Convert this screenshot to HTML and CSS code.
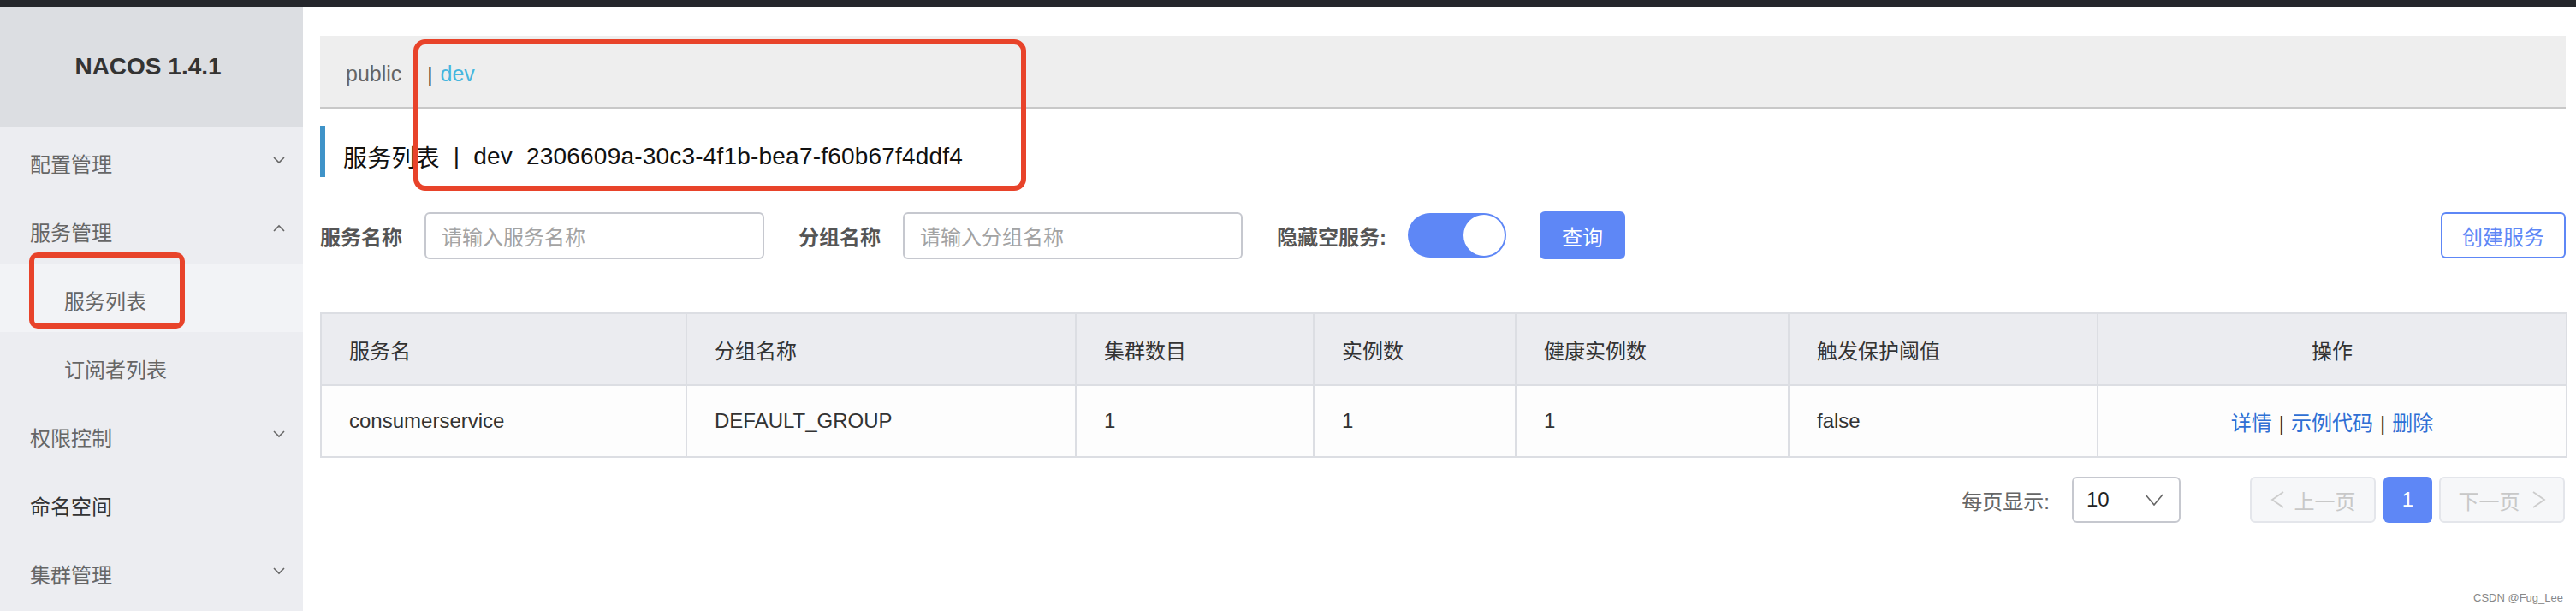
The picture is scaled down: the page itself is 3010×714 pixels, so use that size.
FILE: index.html
```html
<!DOCTYPE html>
<html lang="zh-CN">
<head>
<meta charset="utf-8">
<title>Nacos</title>
<link rel="stylesheet" href="styles.css">
</head>
<body>
<div class="topbar"></div>
<div class="layout">
  <aside class="sidebar">
    <div class="logo">NACOS 1.4.1</div>
    <div class="menu-item"><span>配置管理</span><svg class="chev" viewBox="0 0 14 10"><polyline points="1,2 7,8 13,2"/></svg></div>
    <div class="menu-item"><span>服务管理</span><svg class="chev" viewBox="0 0 14 10"><polyline points="1,8 7,2 13,8"/></svg></div>
    <div class="menu-item sub active"><span>服务列表</span></div>
    <div class="menu-item sub"><span>订阅者列表</span></div>
    <div class="menu-item"><span>权限控制</span><svg class="chev" viewBox="0 0 14 10"><polyline points="1,2 7,8 13,2"/></svg></div>
    <div class="menu-item strong"><span>命名空间</span></div>
    <div class="menu-item"><span>集群管理</span><svg class="chev" viewBox="0 0 14 10"><polyline points="1,2 7,8 13,2"/></svg></div>
  </aside>
  <main class="main">
    <div class="breadcrumb">
      <span class="ns">public</span>
      <span class="ns-sep">|</span>
      <span class="ns-active">dev</span>
    </div>
    <div class="title">
      <span>服务列表</span><span class="title-sep">|</span><span>dev&nbsp;&nbsp;2306609a-30c3-4f1b-bea7-f60b67f4ddf4</span>
    </div>
    <div class="search">
      <span class="label">服务名称</span>
      <div class="input"><span class="ph">请输入服务名称</span></div>
      <span class="label gap">分组名称</span>
      <div class="input"><span class="ph">请输入分组名称</span></div>
      <span class="label gap">隐藏空服务:</span>
      <div class="switch"><div class="knob"></div></div>
      <div class="btn primary">查询</div>
      <div class="btn outline">创建服务</div>
    </div>
    <table class="grid">
      <colgroup>
        <col style="width:427px"><col style="width:455px"><col style="width:278px"><col style="width:236px"><col style="width:319px"><col style="width:361px"><col style="width:548px">
      </colgroup>
      <thead>
        <tr><th>服务名</th><th>分组名称</th><th>集群数目</th><th>实例数</th><th>健康实例数</th><th>触发保护阈值</th><th class="center">操作</th></tr>
      </thead>
      <tbody>
        <tr><td>consumerservice</td><td>DEFAULT_GROUP</td><td>1</td><td>1</td><td>1</td><td>false</td>
          <td class="center"><span class="link">详情</span><span class="sep">|</span><span class="link">示例代码</span><span class="sep">|</span><span class="link">删除</span></td></tr>
      </tbody>
    </table>
    <div class="pager">
      <span class="per">每页显示:</span>
      <div class="select"><span>10</span><svg class="sel-chev" viewBox="0 0 22 14"><polyline points="1,1 11,13 21,1"/></svg></div>
      <div class="pbtn disabled prev"><svg class="pchev" viewBox="0 0 16 20"><polyline points="15,1 2,10 15,19"/></svg><span>上一页</span></div>
      <div class="pbtn current">1</div>
      <div class="pbtn disabled next"><span>下一页</span><svg class="pchev" viewBox="0 0 16 20"><polyline points="1,1 14,10 1,19"/></svg></div>
    </div>
  </main>
</div>
<div class="mark mark-top"></div>
<div class="mark mark-side"></div>
<div class="watermark">CSDN @Fug_Lee</div>
</body>
</html>
```
FILE: styles.css
```css
html, body {
  margin: 0;
  padding: 0;
}
body {
  width: 3010px;
  height: 714px;
  overflow: hidden;
  position: relative;
  background: #fff;
  font-family: "Liberation Sans", "Noto Sans CJK SC", sans-serif;
  font-size: 24px;
  color: #333;
}
.topbar {
  height: 8px;
  background: #25272c;
}
.layout {
  display: flex;
  height: 706px;
}
.sidebar {
  width: 354px;
  flex: none;
  background: #ecedf1;
}
.logo {
  height: 140px;
  background: #dcdee2;
  display: flex;
  align-items: center;
  justify-content: center;
  font-weight: bold;
  font-size: 28px;
  color: #333;
  padding-right: 8px;
  box-sizing: border-box;
}
.menu-item {
  height: 80px;
  display: flex;
  align-items: center;
  justify-content: space-between;
  padding: 4px 21px 0 35px;
  box-sizing: border-box;
  color: #666;
  font-size: 24px;
}
.menu-item.sub {
  padding-left: 75px;
}
.menu-item.active {
  background: #f2f3f6;
}
.menu-item.strong {
  color: #333;
}
.chev {
  width: 14px;
  height: 10px;
  fill: none;
  stroke: #666;
  stroke-width: 1.6;
  margin-top: -6px;
}
.main {
  flex: 1;
  padding: 34px 12px 0 20px;
  min-width: 0;
}
.breadcrumb {
  height: 83px;
  background: #eeeeee;
  border-bottom: 2px solid #c8c8c8;
  display: flex;
  align-items: center;
  padding: 6px 0 0 30px;
  box-sizing: content-box;
  height: 77px;
  font-size: 24px;
}
.ns {
  color: #666;
  font-size: 25px;
}
.ns-sep {
  color: #333;
  margin-left: 30px;
  margin-right: 9px;
}
.ns-active {
  color: #46b6de;
  font-size: 25px;
}
.title {
  margin-top: 20px;
  height: 60px;
  box-sizing: border-box;
  border-left: 6px solid #3f93c8;
  padding: 12px 0 0 21px;
  font-size: 28px;
  color: #111;
  display: flex;
  align-items: center;
  letter-spacing: 0.2px;
}
.title-sep {
  margin: 0 16px;
}
.search {
  margin-top: 40px;
  height: 56px;
  display: flex;
  align-items: center;
}
.label {
  font-weight: bold;
  color: #555;
  margin-right: 26px;
}
.label.gap {
  margin-left: 40px;
}
.input {
  width: 397px;
  height: 55px;
  box-sizing: border-box;
  border: 2px solid #c6c8cf;
  border-radius: 6px;
  display: flex;
  align-items: center;
  padding-left: 18px;
}
.ph {
  color: #a3a3a3;
}
.switch {
  width: 115px;
  height: 52px;
  border-radius: 26px;
  background: #5e87f6;
  display: flex;
  align-items: center;
  justify-content: flex-end;
  padding-right: 2px;
  box-sizing: border-box;
  margin-left: -1px;
}
.knob {
  width: 48px;
  height: 48px;
  border-radius: 50%;
  background: #fff;
}
.btn {
  height: 56px;
  box-sizing: border-box;
  border-radius: 6px;
  display: flex;
  align-items: center;
  justify-content: center;
}
.btn.primary {
  margin-left: 39px;
  width: 100px;
  background: #5e87f6;
  color: #fff;
}
.btn.outline {
  margin-left: auto;
  width: 146px;
  height: 54px;
  border: 2px solid #5e87f6;
  color: #5e87f6;
}
.grid {
  margin-top: 62px;
  width: 2624px;
  table-layout: fixed;
  border-collapse: collapse;
  border: 2px solid #dcdee3;
}
.grid th, .grid td {
  border: 2px solid #dcdee3;
  text-align: left;
  padding: 0 0 0 32px;
  font-weight: normal;
  color: #333;
  font-size: 24px;
}
.grid th {
  height: 82px;
  background: #ebecf0;
}
.grid td {
  height: 82px;
  background: #fdfdfd;
}
.grid .center {
  text-align: center;
  padding-left: 0;
}
.link {
  color: #2f6fd4;
}
.sep {
  color: #333;
  margin: 0 8px;
}
.pager {
  margin-top: 22px;
  display: flex;
  align-items: center;
  justify-content: flex-end;
  padding-right: 1px;
}
.per {
  color: #666;
  margin-right: 26px;
}
.select {
  width: 127px;
  height: 54px;
  box-sizing: border-box;
  border: 2px solid #c6c8cf;
  border-radius: 6px;
  display: flex;
  align-items: center;
  justify-content: space-between;
  padding: 0 18px 0 15px;
  color: #222;
  margin-right: 81px;
}
.sel-chev {
  width: 22px;
  height: 14px;
  fill: none;
  stroke: #666;
  stroke-width: 1.6;
}
.pbtn {
  height: 54px;
  box-sizing: border-box;
  border-radius: 6px;
  display: flex;
  align-items: center;
  justify-content: center;
}
.pbtn.disabled {
  width: 147px;
  background: #f6f7f9;
  border: 2px solid #e4e6eb;
  color: #c8c8c8;
}
.pbtn.prev .pchev {
  margin-right: 12px;
}
.pbtn.next .pchev {
  margin-left: 14px;
}
.pchev {
  width: 16px;
  height: 20px;
  fill: none;
  stroke: #cccccc;
  stroke-width: 1.8;
}
.pbtn.current {
  width: 57px;
  margin: 0 8px 0 9px;
  background: #5e87f6;
  color: #fff;
}
.mark {
  position: absolute;
  border: 6px solid #e8432a;
  border-radius: 14px;
  box-sizing: border-box;
}
.mark-top {
  left: 483px;
  top: 46px;
  width: 716px;
  height: 177px;
}
.mark-side {
  left: 34px;
  top: 295px;
  width: 182px;
  height: 89px;
  border-radius: 10px;
}
.watermark {
  position: absolute;
  right: 15px;
  bottom: 8px;
  font-size: 13px;
  color: #888;
}
```
